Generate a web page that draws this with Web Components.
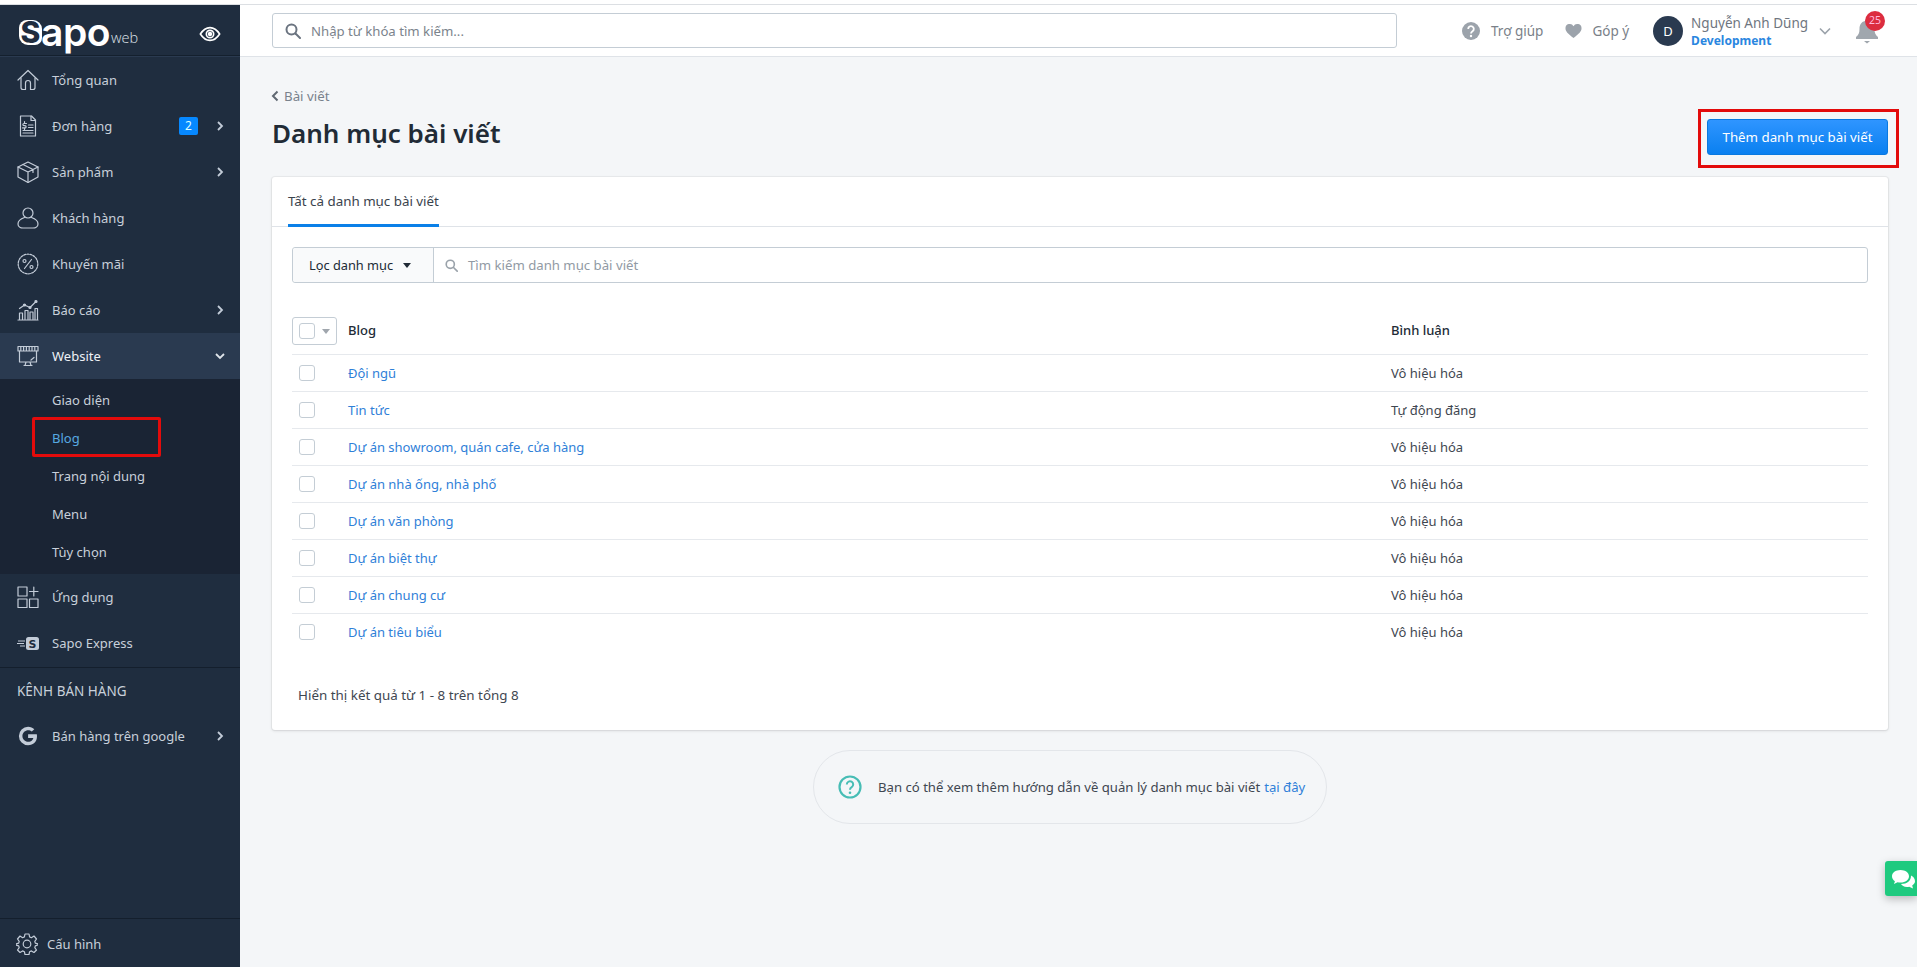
<!DOCTYPE html>
<html lang="vi"><head><meta charset="utf-8"><title>Danh mục bài viết</title>
<style>
html,body{margin:0;padding:0;height:100%;overflow:hidden;background:#f4f6f8;font-family:"Noto Sans","Open Sans",sans-serif;font-size:14px}
</style></head>
<body>
<sapo-app></sapo-app>
<script>
const S='fill="none" stroke="currentColor" stroke-width="1.2" stroke-linecap="round" stroke-linejoin="round"';
const ICONS={
home:`<svg viewBox="0 0 22 22" ${S}><path d="M1 11 11 1.500 21 11"/><path d="M4 9v9.500a2 2 0 0 0 2 2h2.500V14a2.500 2.500 0 0 1 5 0v6.500H16a2 2 0 0 0 2-2V9"/></svg>`,
order:`<svg viewBox="0 0 22 22" ${S}><path d="M3.500 1h11l4 4v16h-15z"/><path d="M14 1v4.500h4.500M7.500 6.500v1M7.500 13.500v1M9.500 8.500H7a1 1 0 0 0 0 2.200h1a1 1 0 0 1 0 2.200H5.500M11.500 10H16M11.500 12.500H16M6 15.500h10M6 18h10"/></svg>`,
box:`<svg viewBox="0 0 22 22" ${S}><path d="M11 1 21 6v10l-10 5.500L1 16V6z"/><path d="M1 6l10 5 10-5M11 11v10.500M6 3.500l10 5v3"/></svg>`,
user:`<svg viewBox="0 0 22 22" ${S}><circle cx="11" cy="6" r="5"/><path d="M7.500 10.500C3 12 1 14 1 17c0 2.500 2.500 4 5 4h10c2.500 0 5-1.500 5-4 0-3-2-5-6.500-6.500"/></svg>`,
promo:`<svg viewBox="0 0 22 22" ${S}><circle cx="11" cy="11" r="9.800" stroke-dasharray="2 1.200"/><path d="M14.500 6.500l-7 9"/><circle cx="7.500" cy="8" r="1.500"/><circle cx="14.500" cy="14" r="1.500"/></svg>`,
chart:`<svg viewBox="0 0 22 22" ${S}><path d="M1 21h20M2.500 20v-6h3v6M8 20v-8.500h3V20M13 20v-7h3v7M18 20V9.500h2.500V20"/><path d="M2.500 9.500 7.500 6l5.500 2.500L18.500 3"/><circle cx="7.500" cy="6" r="1" fill="currentColor"/><circle cx="13" cy="8.500" r="1" fill="currentColor"/><circle cx="19" cy="2.500" r="1" fill="currentColor"/></svg>`,
web:`<svg viewBox="0 0 22 22" ${S}><path d="M1 1.500h20v4.500H1zM3.800 1.500v4.500M6.600 1.500v4.500M9.400 1.500v4.500M12.200 1.500v4.500M15 1.500v4.500M17.800 1.500v4.500"/><path d="M2.500 6v11h17V6M7 20.500h8M9 17l-1 3.500M13 17l1 3.500M14 15l3-2.500"/></svg>`,
apps:`<svg viewBox="0 0 22 22" ${S}><path d="M1 1h9v9H1zM1 13h9v8.500H1zM12.500 13H21v8.500h-8.500zM12.500 5.500H21M16.800 1v9"/></svg>`,
express:`<svg viewBox="0 0 22 22"><path d="M1 9h7M0 11.500h7M3 14h5" stroke="currentColor" stroke-width="1" fill="none"/><rect x="9" y="5" width="13" height="13" rx="2.500" fill="currentColor"/><text x="15.500" y="15.500" text-anchor="middle" font-family="DejaVu Sans" font-weight="700" font-size="11" fill="#1f2d3f">S</text></svg>`,
google:`<svg viewBox="0 0 22 22"><path d="M20 11.200c0 5.300-3.600 9-8.900 9a9.200 9.200 0 0 1 0-18.400c2.500 0 4.600.9 6.200 2.400l-2.500 2.400c-3.300-3.200-9.400-.8-9.400 4.400 0 3.200 2.600 5.800 5.700 5.800 3.600 0 5-2.600 5.200-3.900h-5.200V9.200h8.700c.1.600.2 1.200.2 2z" fill="currentColor"/></svg>`,
gear:`<svg viewBox="0 0 22 22" ${S}><circle cx="11" cy="11" r="3.800"/><path d="M9 1h4l.6 2.900 1.800.8L18 3l2.500 3-1.700 2.400.5 1.700L22 11l-.1 1-2.600.9-.5 1.700L20.500 17 18 19.500l-2.600-1.600-1.800.8L13 21.500H9l-.6-2.800-1.800-.8L4 19.500 1.500 17l1.700-2.400-.5-1.700L0 12v-1l2.700-.9.5-1.700L1.500 6 4 3l2.600 1.700 1.800-.8z"/></svg>`,
search:`<svg viewBox="0 0 16 16" fill="none" stroke="currentColor" stroke-width="2"><circle cx="6.500" cy="6.500" r="5"/><path d="M10.500 10.500 15 15" stroke-linecap="round"/></svg>`
};
function def(name,html){
  customElements.define(name,class extends HTMLElement{
    constructor(){super();this.attachShadow({mode:'open'});}
    connectedCallback(){this.shadowRoot.innerHTML=typeof html==='function'?html(this):html;}
  });
}
const A=(e,n)=>e.getAttribute(n)||'';

def('sapo-logo',`<style>
:host{display:flex;align-items:flex-start;height:30px;color:#fff;line-height:1;margin-top:15px}
.s{width:23px;height:25px;background:#fff;color:#1f2d3f;border-radius:8px 9px 7px 9px;font:800 30px/25px "Inter",sans-serif;text-align:center;flex:none;overflow:hidden}
.a{font:600 39px/25px "Inter",sans-serif;letter-spacing:-.5px;margin-left:-1px;height:30px;position:relative;top:-1px}
.w{font:300 14.500px/16px "Open Sans",sans-serif;margin:10px 0 0 1px;color:#dfe4ea}
</style><span class="s">S</span><span class="a">apo</span><span class="w">web</span>`);

def('nav-item',e=>{const sub=e.hasAttribute('active');return `<style>
:host{display:block}
.r{display:flex;align-items:center;height:46px;padding:0 16px 0 17px;color:#c8d0da;background:${sub?'#2a3a50':'transparent'};font-size:13px}
.i{width:22px;height:22px;display:block;flex:none;color:#c3ccd8}
.i svg{display:block;width:22px;height:22px}
.l{margin-left:13px;flex:1;white-space:nowrap;color:${sub?'#eef1f5':'#c8d0da'}}
.b{background:#0688ff;color:#dff;width:19px;height:18px;border-radius:2px;font-size:12px;line-height:18px;text-align:center;margin-right:18px}
.c{width:8px;height:12px;color:#c3ccd8;display:block}
.d{width:12px;height:8px;color:#dfe4ea;display:block;margin-right:-2px}
</style><div class="r"><span class="i">${ICONS[A(e,'icon')]||''}</span><span class="l">${A(e,'label')}</span>${e.hasAttribute('badge')?`<span class="b">${A(e,'badge')}</span>`:''}${e.hasAttribute('chevron')?`<svg class="c" viewBox="0 0 8 12" fill="none" stroke="currentColor" stroke-width="1.800"><path d="M2 2l4 4-4 4"/></svg>`:''}${sub?`<svg class="d" viewBox="0 0 12 8" fill="none" stroke="currentColor" stroke-width="1.800"><path d="M2 2l4 4 4-4"/></svg>`:''}</div>`});

def('sub-item',e=>`<style>
:host{display:block;position:relative;font-size:13px}
.r{height:38px;line-height:38px;padding-left:52px;color:${e.hasAttribute('current')?'#57a9e2':'#c8d0da'}}
.m{position:absolute;left:32px;top:-2px;width:123px;height:34px;border:3px solid #e30b0b;border-radius:2px}
</style><div class="r"><slot></slot></div>${e.hasAttribute('current')?'<span class="m"></span>':''}`);

def('sapo-sidebar',`<style>
:host{display:flex;flex-direction:column;width:240px;flex:none;background:#1f2d3f;height:100%;font-size:13px}
.brand{display:flex;align-items:flex-start;justify-content:space-between;padding:0 19px 0 19px;border-bottom:1px solid #14202e;box-shadow:0 1px 0 #2a3a50;margin-bottom:1px;box-sizing:border-box;height:51px}
.eye{width:22px;height:22px;color:#fff;margin-top:18px}
.sub{background:#1a2434;padding:2px 0 3px}
.sep{border-top:1px solid #141f2d;margin-top:1px}
.ch{height:47px;line-height:47px;padding-left:17px;color:#c8d0da;font-size:13.500px}
.sp{flex:1}
.foot{border-top:1px solid #141f2d;height:49px;display:flex;align-items:center;padding-left:16px;color:#c8d0da;flex:none;font-size:13px;padding-top:2px;box-sizing:border-box}
.foot svg{width:22px;height:22px;color:#c3ccd8;margin-right:9px}
.grow{margin-top:-2px}
</style>
<div class="brand"><sapo-logo></sapo-logo><svg class="eye" viewBox="0 0 24 24" fill="none" stroke="currentColor" stroke-width="1.800"><path d="M1.500 12C5 6.500 8.500 5 12 5s7 1.500 10.500 7C19 17.500 15.500 19 12 19s-7-1.500-10.500-7z"/><circle cx="12" cy="12" r="4"/><circle cx="12" cy="12" r="1.500" fill="currentColor"/></svg></div>
<nav-item icon="home" label="Tổng quan"></nav-item>
<nav-item icon="order" label="Đơn hàng" badge="2" chevron></nav-item>
<nav-item icon="box" label="Sản phẩm" chevron></nav-item>
<nav-item icon="user" label="Khách hàng"></nav-item>
<nav-item icon="promo" label="Khuyến mãi"></nav-item>
<nav-item icon="chart" label="Báo cáo" chevron></nav-item>
<nav-item icon="web" label="Website" active></nav-item>
<div class="sub"><sub-item>Giao diện</sub-item><sub-item current>Blog</sub-item><sub-item>Trang nội dung</sub-item><sub-item>Menu</sub-item><sub-item>Tùy chọn</sub-item></div>
<nav-item icon="apps" label="Ứng dụng"></nav-item>
<nav-item icon="express" label="Sapo Express"></nav-item>
<div class="sep"></div>
<div class="ch">KÊNH BÁN HÀNG</div>
<nav-item class="grow" icon="google" label="Bán hàng trên google" chevron></nav-item>
<div class="sp"></div>
<div class="foot">${ICONS.gear}<span>Cấu hình</span></div>`);

def('sapo-topbar',`<style>
:host{display:flex;align-items:center;height:51px;background:#fff;border-bottom:1px solid #dfe3e8;padding-left:32px;box-sizing:content-box;flex:none;font-size:13.500px;color:#6b7480}
.q{width:1125px;height:35px;box-sizing:border-box;border:1px solid #c4cdd5;border-radius:3px;display:flex;align-items:center;padding-left:12px;color:#7b838c;font-size:13.200px}
.q svg{width:16px;height:16px;color:#6b7480;margin-right:10px}
.act{display:flex;align-items:center;color:#7a8189}
.help{margin-left:65px}.fb{margin-left:22px}
.act svg{width:18px;height:18px;margin-right:11px;color:#9ca3ab}
.fb svg{margin-right:10px;width:17px}
.av{margin-left:24px;width:30px;height:30px;border-radius:50%;background:#2a3a50;color:#fff;text-align:center;line-height:30px;font-size:13px}
.who{margin-left:8px;line-height:17px;margin-top:3px}
.n{font-size:13.500px;color:#6f7680;white-space:nowrap}
.d{font-size:12px;font-weight:700;color:#2a86e0;white-space:nowrap}
.ch{width:12px;height:8px;margin-left:11px;color:#9ca3ab}
.bell{position:relative;margin-left:25px;width:22px;height:26px;color:#a0a7ae}
.bell svg{width:22px;height:26px;display:block}
.bd{position:absolute;left:9px;top:-7px;width:20px;height:20px;border-radius:50%;background:#dc2d3f;color:#fbd;font-size:10.500px;line-height:18px;text-align:center}
</style>
<div class="q">${ICONS.search}<span>Nhập từ khóa tìm kiếm...</span></div>
<div class="act help"><svg viewBox="0 0 18 18"><circle cx="9" cy="9" r="9" fill="currentColor"/><path d="M6.200 7a2.800 2.800 0 1 1 4.300 2.300C9.500 10 9 10.500 9 11.500" fill="none" stroke="#fff" stroke-width="1.800"/><circle cx="9" cy="14" r="1.200" fill="#fff"/></svg><span>Trợ giúp</span></div>
<div class="act fb"><svg viewBox="0 0 18 16"><path d="M9 15.500C3 11 .5 8.500.5 5.200A4.500 4.500 0 0 1 9 3a4.500 4.500 0 0 1 8.500 2.200C17.500 8.500 15 11 9 15.500z" fill="currentColor"/></svg><span>Góp ý</span></div>
<div class="av">D</div>
<div class="who"><div class="n">Nguyễn Anh Dũng</div><div class="d">Development</div></div>
<svg class="ch" viewBox="0 0 12 8" fill="none" stroke="currentColor" stroke-width="1.600"><path d="M1 1.500l5 5 5-5"/></svg>
<div class="bell"><svg viewBox="0 0 22 26"><path d="M11 1a2 2 0 0 1 2 2c4 1 5.500 4 5.500 8 0 4 1 6 3.500 8v2H0v-2c2.500-2 3.500-4 3.500-8 0-4 1.500-7 5.500-8a2 2 0 0 1 2-2z" fill="currentColor"/><path d="M8 23h6l-3 2.500z" fill="currentColor"/></svg><span class="bd">25</span></div>`);

def('page-head',`<style>
:host{display:flex;justify-content:space-between;align-items:flex-start;height:120px;box-sizing:border-box;padding-top:29px;flex:none}
.bc{display:flex;align-items:center;color:#79828c;font-size:13.300px;line-height:20px;margin-left:-1px}
.bc svg{width:8px;height:12px;margin-right:5px;color:#5f6872}
h1{margin:9px 0 0 0;font-size:26px;line-height:36px;font-weight:600;color:#212b36}
.wrap{position:relative;margin-top:33px}
.wrap::after{content:"";position:absolute;left:-9px;top:-10px;right:-11px;bottom:-13px;border:3px solid #e30b0b;}
button{display:block;width:181px;height:36px;border:1px solid #0a79e0;border-radius:3px;background:linear-gradient(#2f95ff,#0a80f0);color:#fff;font:13.300px "Noto Sans",sans-serif;padding:0}
</style>
<div><div class="bc"><svg viewBox="0 0 8 12" fill="none" stroke="currentColor" stroke-width="2"><path d="M6.500 1.500 2 6l4.500 4.500"/></svg>Bài viết</div><h1>Danh mục bài viết</h1></div>
<div class="wrap"><button>Thêm danh mục bài viết</button></div>`);

def('filter-bar',`<style>
:host{display:flex;height:36px;margin:20px 20px 0;border:1px solid #c4cdd5;border-radius:3px;box-sizing:border-box;font-size:12.800px}
.f{width:141px;flex:none;background:#f9fafb;border-right:1px solid #c4cdd5;display:flex;align-items:center;padding-left:16px;box-sizing:border-box;color:#212b36;border-radius:3px 0 0 3px}
.f i{margin-left:10px;border:4.500px solid transparent;border-top:5px solid #212b36;border-bottom:0}
.s{display:flex;align-items:center;padding-left:11px;color:#919aa4;flex:1;font-size:13.200px}
.s svg{width:13px;height:13px;margin-right:10px;color:#9aa2aa}
</style><div class="f">Lọc danh mục<i></i></div><div class="s">${ICONS.search}<span>Tìm kiếm danh mục bài viết</span></div>`);

def('table-row',e=>{const h=e.hasAttribute('head');return `<style>
:host{display:flex;align-items:center;height:${h?'47px':'37px'};box-sizing:border-box;${h?'':'border-top:1px solid #e6e9ed;'}font-size:13px}
.c{flex:none;width:56px;display:flex;align-items:center}
.b{width:16px;height:16px;box-sizing:border-box;border:1px solid #c4cdd5;border-radius:3px;background:#fff;margin-left:7px}
.g{width:45px;height:28px;box-sizing:border-box;border:1px solid #c4cdd5;border-radius:3px;display:flex;align-items:center}
.g .b{margin-left:6px}
.g i{margin-left:7px;border:4px solid transparent;border-top:5px solid #a0a6ad;border-bottom:0;margin-top:2px}
.t{flex:none;width:1043px;color:${h?'#212b36':'#2f80d8'};${h?'font-weight:500;margin-top:-2px;':''}white-space:nowrap}
.v{color:${h?'#212b36':'#3f4751'};${h?'font-weight:500;margin-top:-2px;':''}white-space:nowrap}
</style><div class="c">${h?'<div class="g"><div class="b"></div><i></i></div>':'<div class="b"></div>'}</div><div class="t">${A(e,'name')}</div><div class="v">${A(e,'value')}</div>`});

def('data-table',`<style>
:host{display:block;margin:24px 20px 0}
</style>
<table-row head name="Blog" value="Bình luận"></table-row>
<table-row name="Đội ngũ" value="Vô hiệu hóa"></table-row>
<table-row name="Tin tức" value="Tự động đăng"></table-row>
<table-row name="Dự án showroom, quán cafe, cửa hàng" value="Vô hiệu hóa"></table-row>
<table-row name="Dự án nhà ống, nhà phố" value="Vô hiệu hóa"></table-row>
<table-row name="Dự án văn phòng" value="Vô hiệu hóa"></table-row>
<table-row name="Dự án biệt thự" value="Vô hiệu hóa"></table-row>
<table-row name="Dự án chung cư" value="Vô hiệu hóa"></table-row>
<table-row name="Dự án tiêu biểu" value="Vô hiệu hóa"></table-row>`);

def('list-card',`<style>
:host{display:block;height:553px;background:#fff;border-radius:3px;box-shadow:0 0 0 1px rgba(63,63,68,.05),0 1px 3px rgba(63,63,68,.15);flex:none}
.tabs{height:50px;border-bottom:1px solid #dfe3e8;box-sizing:border-box;padding-left:16px}
.tab{display:inline-block;height:50px;box-sizing:border-box;padding-top:15px;border-bottom:3px solid #0a80e8;font-size:13.350px;line-height:18px;color:#3a434d}
.pg{margin:36px 0 0 26px;font-size:13.400px;color:#3f4751;line-height:18px}
</style>
<div class="tabs"><span class="tab">Tất cả danh mục bài viết</span></div>
<filter-bar></filter-bar><data-table></data-table>
<div class="pg">Hiển thị kết quả từ 1 - 8 trên tổng 8</div>`);

def('help-pill',`<style>
:host{display:flex;align-items:center;width:514px;height:74px;box-sizing:border-box;margin:20px 0 0 541px;border:1px solid #e3e6ea;border-radius:37px;padding-left:24px;font-size:13.150px;color:#3f4751;flex:none;white-space:nowrap}
svg{width:24px;height:24px;margin-right:16px;flex:none}
a{color:#2f80d8;margin-left:4px}
</style><svg viewBox="0 0 24 24"><circle cx="12" cy="12" r="10.500" fill="none" stroke="#47bdb5" stroke-width="2.200"/><path d="M8.800 9.500a3.200 3.200 0 1 1 4.900 2.700c-1.100.7-1.700 1.300-1.700 2.500" fill="none" stroke="#47bdb5" stroke-width="2"/><circle cx="12" cy="17.700" r="1.300" fill="#47bdb5"/></svg><span>Bạn có thể xem thêm hướng dẫn về quản lý danh mục bài viết</span><a>tại đây</a>`);

def('chat-tab',`<style>
:host{position:fixed;right:0;top:861px;width:32px;height:35px;background:#1fca7f;border-radius:3px 0 0 3px;box-shadow:0 3px 8px rgba(0,0,0,.25);display:block}
svg{position:absolute;left:6px;top:8px;width:26px;height:22px}
</style><svg viewBox="0 0 26 22" fill="#fff"><path d="M9.500 1C4.500 1 1 3.800 1 7.300c0 2 1.100 3.700 2.900 4.900L3 15l3.500-1.800c1 .3 2 .4 3 .4 5 0 8.500-2.800 8.500-6.300S14.500 1 9.500 1z"/><path d="M20 6.500c.3 5-4 8.500-10 8.500.8 1.500 3 3 6 3 .8 0 1.500-.1 2.200-.3L22 19.500l-.8-3c1.700-1 2.800-2.500 2.800-4.200 0-2.500-1.600-4.700-4-5.800z"/></svg>`);

def('sapo-app',`<style>
:host{display:flex;flex-direction:column;height:967px;overflow:hidden}
.top{height:4px;background:#fff;border-bottom:1px solid #dcdfe3;flex:none}
.body{flex:1;display:flex;min-height:0}
.main{flex:1;display:flex;flex-direction:column;min-width:0}
.content{flex:1;display:flex;flex-direction:column;padding:0 29px 0 32px}
</style>
<div class="top"></div>
<div class="body"><sapo-sidebar></sapo-sidebar>
<div class="main"><sapo-topbar></sapo-topbar><div class="content"><page-head></page-head><list-card></list-card><help-pill></help-pill></div></div></div>
<chat-tab></chat-tab>`);
</script>
</body></html>
